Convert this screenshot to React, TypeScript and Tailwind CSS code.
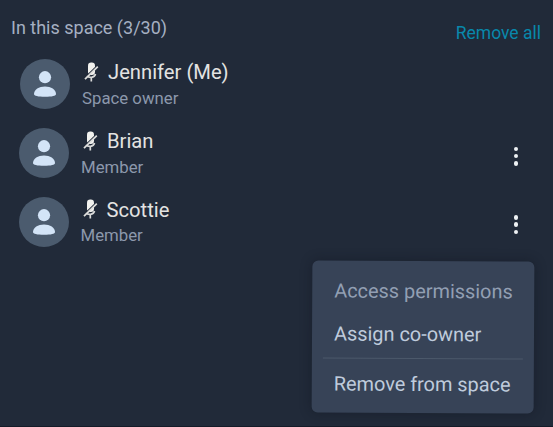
interface Member {
  id: string;
  name: string;
  role: string;
  canManage: boolean;
  rowClass: string;
}

const members: Member[] = [
  { id: 'jennifer', name: 'Jennifer (Me)', role: 'Space owner', canManage: false, rowClass: 'pl-5' },
  { id: 'brian', name: 'Brian', role: 'Member', canManage: true, rowClass: 'pl-[19px]' },
  { id: 'scottie', name: 'Scottie', role: 'Member', canManage: true, rowClass: 'pl-[18.5px]' },
];

function Avatar() {
  return (
    <div className="flex h-[50px] w-[50px] shrink-0 items-center justify-center rounded-full bg-[#4b5b6e]">
      <svg viewBox="0 0 24 28" className="h-7 w-6" fill="#d3e4f7">
        <circle cx="12" cy="7.2" r="6.1" />
        <path d="M1 24C1 19.5 6 16.5 12 16.5S23 19.5 23 24C23 25.8 19 26.8 12 26.8S1 25.8 1 24Z" />
      </svg>
    </div>
  );
}

function MicOff() {
  return (
    <svg viewBox="0 0 16 20" className="h-5 w-4 shrink-0" fill="none">
      <rect x="5" y="0.5" width="7" height="12.5" rx="3.2" fill="#f2f2ef" />
      <path d="M4 13.5C6 16.5 11.5 16 12.5 12M8.3 15.5V19.5" stroke="#d9dad9" strokeWidth="1.7" />
      <path d="M14.2 3.6L1.5 16" stroke="#212a39" strokeWidth="1.3" />
      <path d="M14.8 4.7L2 17.2" stroke="#dededc" strokeWidth="1.7" />
    </svg>
  );
}

function MoreButton() {
  return (
    <button aria-label="More" className="mt-[6px] flex w-5 translate-x-px flex-col items-center gap-[2.6px]">
      <span className="h-[4.6px] w-[4.6px] rounded-full bg-[#eef1f4]" />
      <span className="h-[4.6px] w-[4.6px] rounded-full bg-[#eef1f4]" />
      <span className="h-[4.6px] w-[4.6px] rounded-full bg-[#eef1f4]" />
    </button>
  );
}

function MemberRow({ member }: { member: Member }) {
  return (
    <div className={`flex h-[68.7px] items-center pr-7 ${member.rowClass}`}>
      <Avatar />
      <div className="ml-3 flex-1">
        <div className="flex h-[26px] items-center gap-[9px] pl-px text-[20.2px] text-[#e3e3e2]">
          <MicOff />
          <span className="pt-px">{member.name}</span>
        </div>
        <div className="h-[25px] text-[16.8px] leading-[26px] text-[#8c98ac]">{member.role}</div>
      </div>
      {member.canManage && <MoreButton />}
    </div>
  );
}

function MemberMenu() {
  return (
    <div className="absolute left-[312px] top-[261px] h-[152px] w-[222px] rotate-[0.3deg] whitespace-nowrap rounded-md bg-[#374357] px-[11px] pt-[9px] text-[19.9px] text-[#bfcbdc] shadow-[0_0_12px_rgba(15,21,32,0.45)]">
      <div className="flex h-[43px] items-center px-[11px] text-[#929fb3]">Access permissions</div>
      <div className="flex h-[43px] items-center px-[11px]">Assign co-owner</div>
      <div className="mt-[2px] h-px bg-[#4c596b]" />
      <div className="flex h-[52px] items-center px-[11px]">Remove from space</div>
    </div>
  );
}

export default function App() {
  return (
    <div className="relative h-[427px] w-[553px] overflow-hidden border-b border-[#141b28] bg-[#212a39] font-['Roboto',sans-serif]">
      <div className="flex h-[50px] items-start justify-between pl-[11px] pr-3 pt-[14px]">
        <h2 className="text-[18px] leading-[27px] text-[#a5b0c2]">In this space (3/30)</h2>
        <button className="mt-[6px] text-[17.5px] leading-[26px] text-[#0888ab]">Remove all</button>
      </div>
      {members.map((member) => (
        <MemberRow key={member.id} member={member} />
      ))}
      <MemberMenu />
    </div>
  );
}
